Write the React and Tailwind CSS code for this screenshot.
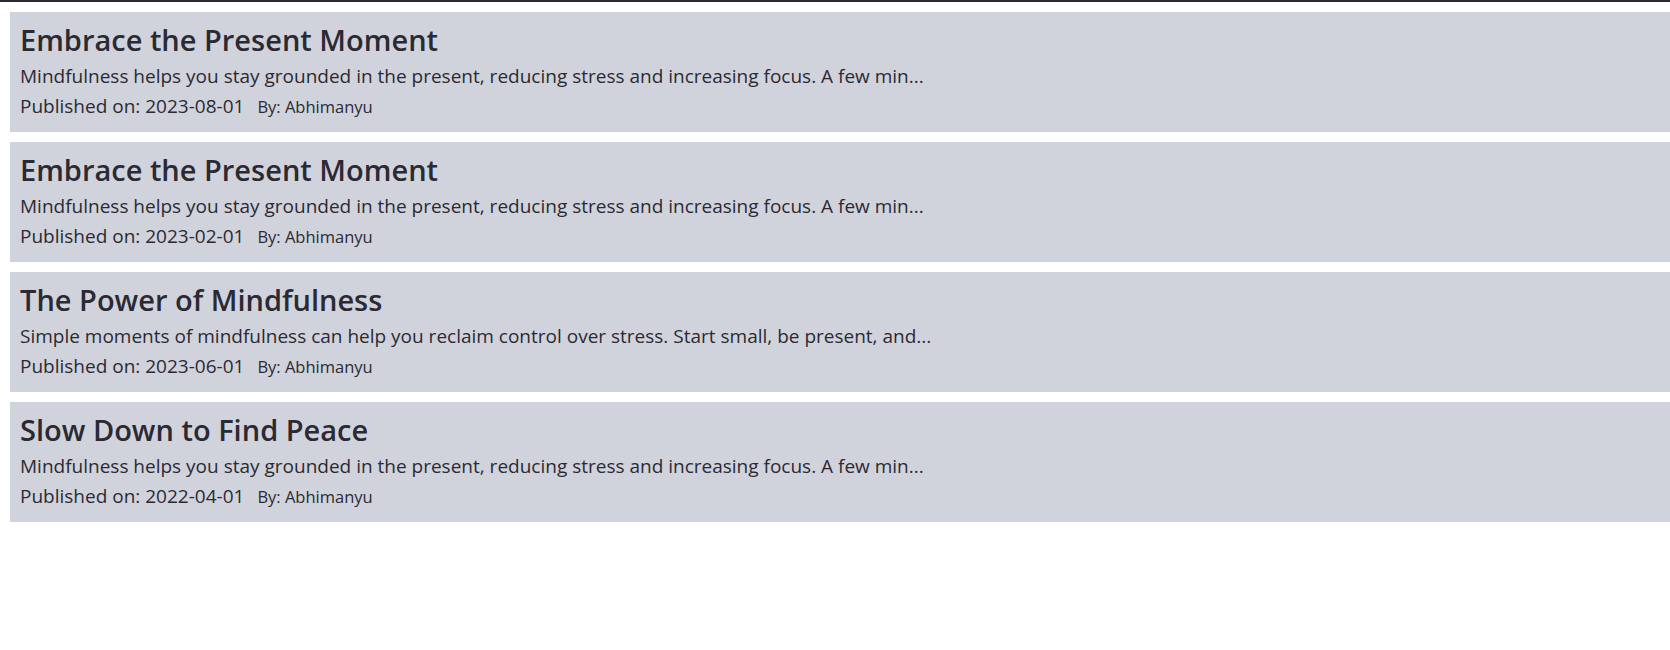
import React from 'react';

const posts = [
  {
    title: 'Embrace the Present Moment',
    excerpt:
      'Mindfulness helps you stay grounded in the present, reducing stress and increasing focus. A few min...',
    date: '2023-08-01',
    author: 'Abhimanyu',
  },
  {
    title: 'Embrace the Present Moment',
    excerpt:
      'Mindfulness helps you stay grounded in the present, reducing stress and increasing focus. A few min...',
    date: '2023-02-01',
    author: 'Abhimanyu',
  },
  {
    title: 'The Power of Mindfulness',
    excerpt:
      'Simple moments of mindfulness can help you reclaim control over stress. Start small, be present, and...',
    date: '2023-06-01',
    author: 'Abhimanyu',
  },
  {
    title: 'Slow Down to Find Peace',
    excerpt:
      'Mindfulness helps you stay grounded in the present, reducing stress and increasing focus. A few min...',
    date: '2022-04-01',
    author: 'Abhimanyu',
  },
];

const PostCard = ({ post }) => {
  return (
    <div className="h-[120px] bg-[#d1d3dc] pl-[10px] pt-[9px] text-[#2b2a33]">
      <h2 className="text-[29px] font-semibold leading-[38px]">{post.title}</h2>
      <p className="text-[19px] leading-[34px]">{post.excerpt}</p>
      <p className="flex items-baseline gap-[13px] text-[19px] leading-[26px]">
        <span>Published on: {post.date}</span>
        <span className="text-[16.5px]">By: {post.author}</span>
      </p>
    </div>
  );
};

export default function App() {
  return (
    <div className="min-h-screen bg-white font-['Open_Sans',sans-serif]">
      <div className="h-[2px] bg-[#2b2a33]" />
      <div className="flex flex-col gap-[10px] pl-[10px] pt-[10px]">
        {posts.map((post, i) => (
          <PostCard key={i} post={post} />
        ))}
      </div>
    </div>
  );
}
